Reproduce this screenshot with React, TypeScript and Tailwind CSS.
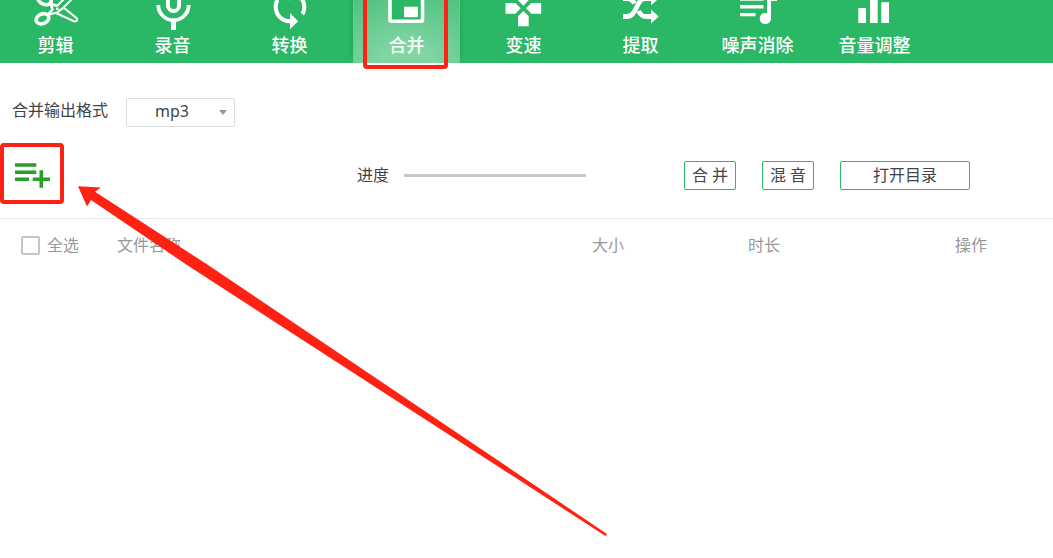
import React, { useState } from 'react';
import clsx from 'clsx';

const tabs = [
    {
        id: 'cut',
        label: '剪辑',
        icon: (
            <g fill="none" stroke="currentColor">
                <ellipse cx="7.5" cy="18.8" rx="6.6" ry="4.8" strokeWidth="3.6" transform="rotate(-24 7.5 18.8)" />
                <ellipse cx="9.5" cy="-0.5" rx="7" ry="4.8" strokeWidth="3.6" transform="rotate(24 9.5 -.5)" />
                <path d="M16 3.5 22 6 32-4M26.500 9.500 38-2" strokeWidth="2" />
                <path d="M13 14.500 17.500 9.500 16 4.500 22 5.500" strokeWidth="2.6" strokeLinejoin="round" />
                <path d="M28.500 7.500 42 18.500Q42.800 21.500 39.500 21.500L21 13" strokeWidth="2" strokeLinejoin="round" />
                <path d="M14 14.500 22 12.500 28 8" strokeWidth="2" />
                <circle cx="22.300" cy="8.800" r="1.400" fill="currentColor" stroke="none" />
            </g>
        )
    },
    {
        id: 'record',
        label: '录音',
        icon: (
            <g fill="none" stroke="currentColor">
                <rect x="16" y="-14" width="11" height="25" rx="5.5" strokeWidth="4" />
                <path d="M6.3 5a15.2 15.2 0 0 0 30.4 0" strokeWidth="3.8" />
                <path d="M21.5 20v10" strokeWidth="5" />
            </g>
        )
    },
    {
        id: 'convert',
        label: '转换',
        icon: (
            <path
                transform="translate(-3.5 -17.6) scale(2.04)"
                fill="currentColor"
                d="M12 4V1L8 5l4 4V6c3.31 0 6 2.69 6 6 0 1.01-.25 1.97-.7 2.8l1.46 1.46C19.54 15.03 20 13.57 20 12c0-4.42-3.58-8-8-8zm0 14c-3.31 0-6-2.69-6-6 0-1.01.25-1.97.7-2.8L5.24 7.74C4.46 8.97 4 10.43 4 12c0 4.42 3.58 8 8 8v3l4-4-4-4v3z"
            />
        )
    },
    {
        id: 'merge',
        label: '合并',
        icon: (
            <g>
                <rect x="4" y="-8" width="32.5" height="29.3" rx="1.5" fill="#2ab866" stroke="currentColor" strokeWidth="3.6" />
                <rect x="18" y="6.7" width="14" height="10.5" fill="currentColor" />
            </g>
        )
    },
    {
        id: 'speed',
        label: '变速',
        icon: (
            <path
                transform="translate(-1 -13) scale(1.78)"
                fill="currentColor"
                d="M15 7.5V2H9v5.5l3 3 3-3zM7.5 9H2v6h5.5l3-3-3-3zM9 16.5V22h6v-5.5l-3-3-3 3zM16.5 9l-3 3 3 3H22V9h-5.5z"
            />
        )
    },
    {
        id: 'extract',
        label: '提取',
        icon: (
            <g fill="none" stroke="currentColor" strokeWidth="4.8">
                <path d="M3 16.5h4c5 0 7-4 9.5-9s4-9 9-9h6" />
                <path d="M3-1.5h4c4 0 6 2 7.500 5" />
                <path d="M18.500 11c2 4 4 5.500 7.500 5.500h6" />
                <path d="M31 9.500 38.700 16.500 31 23.500zM31-8.500 38.700-1.500 31 5.500z" fill="currentColor" stroke="none" />
            </g>
        )
    },
    {
        id: 'denoise',
        label: '噪声消除',
        icon: (
            <g fill="currentColor">
                <path d="M3-3h23.500v3.800H3zM3 4.900h23.500v3.600H3zM3 12.900h15.500v3.400H3z" />
                <path d="M30-8h10v9h-6v18h-4z" />
                <circle cx="28.300" cy="18.500" r="5.600" />
            </g>
        )
    },
    {
        id: 'volume',
        label: '音量调整',
        icon: <path fill="currentColor" d="M4.300 8H12v15H4.300zM16-4h7.700v27H16zM27.300 2.300H35V23h-7.700z" />
    }
];

const formats = ['mp3', 'wav', 'flac', 'm4a'];

export default function App() {
    const [activeTab, setActiveTab] = useState('merge');
    const [format, setFormat] = useState('mp3');

    return (
        <main className="relative min-h-screen bg-white text-base leading-6 text-[#444444] font-['Noto_Sans','Noto_Sans_CJK_SC',sans-serif]">
            <nav className="flex gap-2.5 bg-[#2ab866] pl-0.5 text-white">
                {tabs.map(tab => (
                    <div key={tab.id} className="relative">
                        <button
                            type="button"
                            onClick={() => setActiveTab(tab.id)}
                            className={clsx(
                                'flex h-[63px] w-[107px] flex-col items-center',
                                activeTab === tab.id &&
                                    'border-x border-[#6ccb94] bg-[radial-gradient(120%_140%_at_bottom,#80d5a3_20%,#42bc76_100%)] shadow-[0_-6px_6px_#1f9b52]'
                            )}
                        >
                            <svg width="41" height="32" viewBox="0 0 41 32" className="shrink-0 overflow-visible" aria-hidden="true">
                                {tab.icon}
                            </svg>
                            <span className="text-lg leading-[26px] font-medium whitespace-nowrap">{tab.label}</span>
                        </button>
                        {tab.id === 'merge' && (
                            <div className="pointer-events-none absolute -top-2 -bottom-1.5 left-2.5 w-[85px] rounded-sm border-4 border-[#ff2113]" />
                        )}
                    </div>
                ))}
            </nav>

            <section className="border-b border-[#e6e6e6] pt-[35px] pb-[11px]">
                <div className="flex items-start gap-[18px] pl-3">
                    <label htmlFor="format">合并输出格式</label>
                    <div className="relative">
                        <select
                            id="format"
                            value={format}
                            onChange={e => setFormat(e.target.value)}
                            className="h-[29px] w-[109px] appearance-none rounded-xs border border-[#dddddd] bg-white pb-1 pl-7 leading-6 outline-none"
                        >
                            {formats.map(f => <option key={f} value={f}>{f}</option>)}
                        </select>
                        <svg width="8" height="5" viewBox="0 0 8 5" className="pointer-events-none absolute top-3 right-2" aria-hidden="true">
                            <path d="M0 0h8L4 5z" fill="#8c9ba1" />
                        </svg>
                    </div>
                </div>

                <div className="mt-4 flex h-16 items-center pr-[83px]">
                    <button
                        type="button"
                        aria-label="添加文件"
                        className="h-[61px] w-16 shrink-0 self-start rounded-sm border-4 border-[#ff2113]"
                    >
                        <svg width="56" height="53" viewBox="4 147 56 53" aria-hidden="true">
                            <path
                                d="M15 165h21.300M15 172.300h21.300M15 179.200h14M32.700 179.200h17.300M41.300 170.300v17.500"
                                fill="none"
                                stroke="#2a9d2a"
                                strokeWidth="3.6"
                            />
                        </svg>
                    </button>

                    <div className="ml-auto flex items-center gap-[15px]">
                        <span>进度</span>
                        <div className="h-[3px] w-[182px] bg-[#c8c8c8]" />
                    </div>

                    <div className="ml-[98px] flex gap-[26px]">
                        <button type="button" className="h-[29px] w-[52px] rounded-xs border border-[#2ab866]">合 并</button>
                        <button type="button" className="h-[29px] w-[52px] rounded-xs border border-[#2ab866]">混 音</button>
                        <button type="button" className="h-[29px] w-[130px] rounded-xs border border-[#2ab866]">打开目录</button>
                    </div>
                </div>
            </section>

            <table className="w-full table-fixed text-left text-[#999999]">
                <thead>
                    <tr className="h-[52px]">
                        <th className="w-[117px] pl-[21px] font-normal">
                            <label className="flex items-center gap-[7px]">
                                <input type="checkbox" className="size-[19px] appearance-none rounded-xs border-2 border-[#c6c6c6] checked:bg-[#2ab866]" />
                                全选
                            </label>
                        </th>
                        <th className="font-normal">文件名称</th>
                        <th className="w-[156px] font-normal">大小</th>
                        <th className="w-[207px] font-normal">时长</th>
                        <th className="w-[98px] font-normal">操作</th>
                    </tr>
                </thead>
            </table>

            {/* pointer towards the add button */}
            <svg width="620" height="545" viewBox="0 0 620 545" className="pointer-events-none absolute top-0 left-0" aria-hidden="true">
                <path d="M78 186.300 101 187.500 95 191.700 208 265 607 534 605.500 536 187 265 91 200 87 206.500z" fill="#ff2113" />
            </svg>
        </main>
    );
}
